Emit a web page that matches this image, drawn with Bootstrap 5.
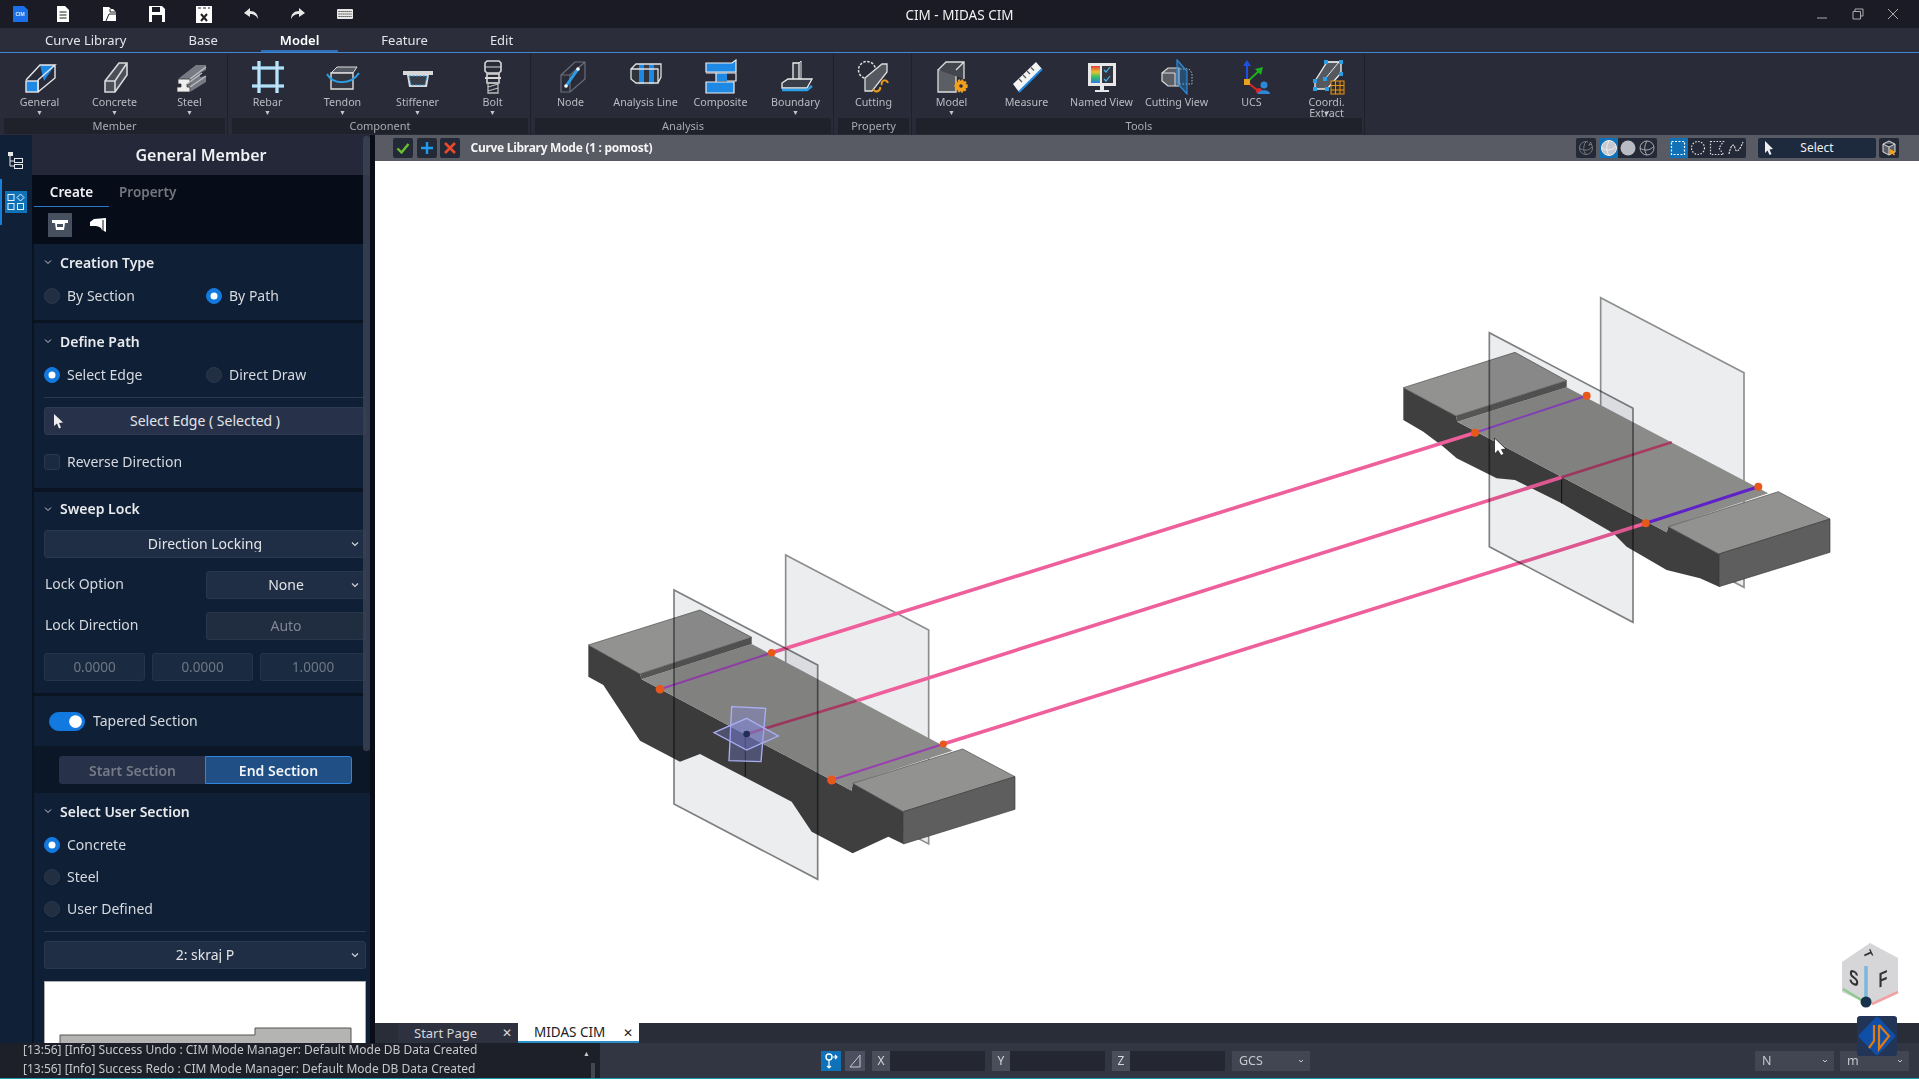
<!DOCTYPE html>
<html lang="en">
<head>
<meta charset="UTF-8">
<title>CIM - MIDAS CIM</title>
<link href="https://cdn.jsdelivr.net/npm/bootstrap@5.3.0/dist/css/bootstrap.min.css" rel="stylesheet">
<style>
html, body { height: 100%; margin: 0; overflow: hidden; }
body { background: #0a0d18; font-family: "Noto Sans", sans-serif; color: #e6e8ec; position: relative; }
svg { display: block; }

/* title bar + ribbon */
.title-bar { height: 28px; background: #1a1b25; }
.title-side { flex: 1 1 0; }
.logo-box { width: 39.5px; }
.tb-icon { width: 47px; }
.app-title { font-size: 13.5px; color: #f2f2f2; padding-top: 3px; }
.win-btn { width: 35.5px; }
.win-btn:last-child { margin-right: 8px; }
.menu-row { height: 25px; background: #2b2e3a; border-bottom: 1px solid #3f87d8; padding-left: 26px; gap: 24px; }
.menu-row .nav-link { padding: 0 19px; height: 24px; line-height: 25px; font-size: 13px; color: #e3e5ea; }
.menu-row .nav-link.active { color: #fff; font-weight: 600; border-bottom: 2px solid #2e6fb5; }
.ribbon { height: 82px; background: #292c38; padding-left: 2px; gap: 2px; }
.rb-group { border-right: 1px solid #1e202a; }
.rb-items { height: 65px; }
.rb-item { width: 75px; padding-top: 6px; position: relative; }
.rb-item svg { margin: 0 auto; }
.rb-label { font-size: 10.7px; line-height: 11px; color: #b9bbc2; text-align: center; margin-top: 2px; white-space: nowrap; }
.rb-arrow { font-size: 7px; line-height: 9px; color: #c5c7cc; text-align: center; }
.rb-over { margin-top: -10px; }
.rb-cap { height: 16px; line-height: 16px; margin: 0 2px 0 2px; background: #1f212b; font-size: 11px; color: #a9abb3; text-align: center; }

/* main area */
.work { height: 908px; }
.side { width: 370px; position: relative; overflow: hidden; background: #0a1322; }
.rail { width: 32px; background: #0f2037; position: relative; }
.rail-tree { padding: 17px 0 0 7px; }
.rail-active { margin-top: 10px; height: 46px; border-left: 2px solid #1a7fd6; padding: 12px 0 0 3px; }
.rail-blue { width: 22px; height: 22px; background: #0f72b8; padding: 2px; }
.pane { width: 338px; }
.pane-title { height: 40px; background: #242838; font-size: 16px; font-weight: 600; color: #f0f1f4; line-height: 40px; text-align: center; }
.pane-tabs { height: 69px; background: #060c18; padding-left: 2px; }
.pane-tabs .nav-link { padding: 0; width: 75px; height: 32px; line-height: 34px; font-size: 13.5px; font-weight: 600; text-align: center; color: #74777f; }
.pane-tabs .nav-link.active { color: #eef0f3; border-bottom: 1px solid #2e78c8; }
.pane-tabs .nav-link.off { width: 80px; text-align: left; padding-left: 10px; }
.mode-btns { padding: 6px 0 0 14px; gap: 14px; }
.mode-on { width: 24px; height: 24px; background: #47505e; }
.mode-off { width: 24px; height: 24px; }
.block { background: #0f1f35; margin-left: 2px; padding: 0 4px 0 10px; font-size: 14px; color: #d6d9de; }
.block + .block { margin-top: 3px; }
.b-head { height: 37px; padding-bottom: 1px; font-size: 14px; font-weight: 600; color: #e8eaee; }
.b-head.short { height: 35px; padding-bottom: 2px; }
.b-head svg { margin-right: 8px; }
.opt-row { height: 28px; }
.opt-col { width: 162px; }
.opt-row .form-check-input, .stack-row .form-check-input { width: 16px; height: 16px; margin: 1px 7px 0 0; background-color: #222e42; border: 1px solid #2c384c; }
.opt-row .form-check-input:checked, .stack-row .form-check-input:checked { background-color: #1279e0; border-color: #1279e0; }
.opt-row input[type=checkbox] { border-radius: 3px; background-color: #1a2a40; }
.stack-row { height: 32px; }
.b-hr { height: 1px; background: #2c3a50; margin: 0; }
.dark-btn { height: 28px; background: #27324a; border: 1px solid #2e3a50; border-radius: 3px; color: #e2e4e8; font-size: 14px; padding: 0; line-height: 24px; width: 100%; }
.pointer { left: 8px; top: 6px; }
.dark-sel { height: 28px; background-color: #202e45; border: 1px solid #2a384e; border-radius: 3px; color: #e2e4e8; font-size: 14px; line-height: 16px; padding: 0; text-align: center; text-align-last: center;
  background-image: url("data:image/svg+xml,%3csvg xmlns='http://www.w3.org/2000/svg' viewBox='0 0 10 10'%3e%3cpath d='M2 3.5 5 6.5 8 3.5' fill='none' stroke='%23d0d3d8' stroke-width='1.2'/%3e%3c/svg%3e"); background-size: 10px 10px; background-position: right 5px center; }
.dark-sel:disabled { background-color: #202c40; color: #7f8692; background-image: none; }
.lock-lbl { flex: 0 0 162px; padding: 0 0 3px 1px; }
.num-in { height: 28px; flex: 0 0 101px; width: 101px; border-radius: 3px; background: #1a2a40 !important; border: 1px solid #263449; color: #6f7785 !important; text-align: center; font-size: 13.5px; padding: 0; }
.num-in:last-child { flex: 1 1 0; }
.num-row { gap: 7px; margin-top: 13px; }
.taper { height: 50px; padding-left: 15px; }
.taper .form-check-input { width: 36px; height: 19px; margin: 0 8px 0 0; background-color: #1279e0; border-color: #1279e0; float: none; }
.taper .form-check-label { padding-bottom: 1px; }
.seg-wrap { height: 47px; margin-left: 2px; padding: 10px 0 0 25px; background: #0b1626; }
.seg-wrap .btn { width: 147px; height: 28px; padding: 0; line-height: 25px; font-size: 14px; font-weight: 600; border-radius: 3px; flex: 0 0 auto; }
.seg-off { background: #27324a; border: 1px solid #27324a; color: #747b87; }
.seg-on { background: #1f4f85 !important; border: 1px solid #2e86e0 !important; color: #f2f4f7 !important; }
.thumb { height: 70px; background: #fff; border: 1px solid #aaa; margin-top: 12px; overflow: hidden; }
.scroll-thumb { position: absolute; left: 363px; top: 1px; width: 7px; height: 615px; background: #3a4253; border-radius: 3px; opacity: .85; }

/* viewport */
.gutter { width: 5px; background: #0a0d18; }
.view-col { width: 1544px; }
.view-bar { height: 26px; background: #585a64; padding-left: 18px; }
.vb-btn { width: 20px; height: 20px; border-radius: 2px; background: #232936; margin-right: 3.5px; }
.vb-title { font-size: 12px; font-weight: 700; letter-spacing: -.28px; color: #f5f5f5; margin-left: 7px; }
.vb-set { height: 20px; border-radius: 2px; background: #232936; }
.vb-cell { width: 19.3px; height: 20px; }
.vb-cell.on { background: #0f72b8; }
.vb-select { width: 118px; height: 20px; background: #1d2a3e; border-radius: 2px; position: relative; font-size: 12px; line-height: 19px; text-align: center; color: #eee; margin-left: 12px; }
.vb-select svg { position: absolute; left: 6px; top: 3px; }
.scene { height: 862px; background: #fff; }
.plane { mix-blend-mode: multiply; }
.doc-tabs { height: 20px; background: #292d38; padding-left: 23px; }
.doc-tab { height: 20px; width: 120px; background: #2e3240; font-size: 13px; line-height: 20px; color: #d5d7dc; padding-left: 16px; position: relative; }
.doc-tab.live { width: 121px; background: #fff; color: #222; border-bottom: 2px solid #2a8fc4; padding-left: 16px; line-height: 19px; font-size: 13.5px; }
.doc-x { position: absolute; right: 6px; top: 0; font-size: 12px; }

/* status */
.status { height: 36px; background: #323642; border-bottom: 1px solid #1d9bb0; }
.log { width: 600px; height: 35px; background: #1e2029; position: relative; padding: 0 0 0 23px; font-size: 12px; line-height: 19px; color: #c5c7cc; }
.log-first { margin-top: -3px; }
.log-up { position: absolute; left: 583px; top: 1px; font-size: 7px; color: #ccc; }
.log-bar { position: absolute; left: 591px; top: 20px; width: 4px; height: 15px; background: #44474f; }
.coords { margin-left: 221px; gap: 4px; }
.co-btn { width: 20px; height: 20px; background: #4a5060; }
.co-btn.on { background: #0f72b8; }
.co-lab { width: 18px; height: 20px; background: #4a4e5b; font-size: 12px; line-height: 20px; text-align: center; color: #d6d8dc; margin-left: 3px; margin-right: -4px; }
.co-val { width: 95px; height: 20px; background: #242732; }
.st-sel { height: 20px; background-color: #424653; border: 0; border-radius: 0; font-size: 12.5px; line-height: 14px; color: #c5c8cd; padding: 0 16px 0 7px;
  background-image: url("data:image/svg+xml,%3csvg xmlns='http://www.w3.org/2000/svg' viewBox='0 0 10 10'%3e%3cpath d='M3 4 5 6 7 4' fill='none' stroke='%23c5c8cd' stroke-width='1'/%3e%3c/svg%3e"); background-size: 10px 10px; background-position: right 4px center; }
.sel-gcs { width: 78px; margin-left: 3px; }
.sel-n { width: 79px; }
.sel-m { width: 69px; margin: 0 10px 0 6px; }

.axis-logo { position: absolute; left: 1857px; top: 1016px; width: 40px; height: 40px; background: #223556; border-radius: 3px; }
</style>
</head>
<body class="d-flex flex-column">

<!-- title bar -->
<div class="title-bar d-flex align-items-center">
  <div class="title-side d-flex align-items-center">
    <div class="logo-box d-flex justify-content-center">
      <svg width="16" height="16" viewBox="0 0 16 16"><path d="M1 0H12L16 4V16H1Z" fill="#1b6fe8"/><text x="8" y="10" font-size="5" font-weight="700" fill="#dbe9ff" text-anchor="middle" font-family="Liberation Sans">CIM</text></svg>
    </div>
    <div class="tb-icon d-flex justify-content-center"><svg width="14" height="16" viewBox="0 0 14 16"><path d="M1 0H9L13 4V16H1Z" fill="#fff"/><path d="M3.500 6H10.500M3.500 9H10.500M3.500 12H10.500" stroke="#222" stroke-width="1"/></svg></div>
    <div class="tb-icon d-flex justify-content-center"><svg width="16" height="16" viewBox="0 0 16 16"><path d="M1 1H7L9 3H11L14 6V15H1Z" fill="#fff"/><path d="M8 3V6H14M4 15 7 8H15" fill="none" stroke="#222" stroke-width="1"/></svg></div>
    <div class="tb-icon d-flex justify-content-center"><svg width="16" height="16" viewBox="0 0 16 16"><path d="M0 0H13L16 3V16H0Z" fill="#fff"/><rect x="3" y="1" width="8" height="5" fill="#1a1b25"/><rect x="3" y="9" width="10" height="7" fill="#1a1b25"/></svg></div>
    <div class="tb-icon d-flex justify-content-center"><svg width="16" height="17" viewBox="0 0 16 17"><rect width="16" height="17" fill="#fff"/><path d="M2 2H5M7 2H10M12 2H14" stroke="#222"/><path d="M5 8 11 15M11 8 5 15" stroke="#222" stroke-width="2"/></svg></div>
    <div class="tb-icon d-flex justify-content-center"><svg width="16" height="14" viewBox="0 0 16 14"><path d="M7 1 1 6 7 10V7C10 7 13 8 15 12 15 7 12 4 7 4Z" fill="#e8e8e8"/></svg></div>
    <div class="tb-icon d-flex justify-content-center"><svg width="16" height="14" viewBox="0 0 16 14"><path d="M9 1 15 6 9 10V7C6 7 3 8 1 12 1 7 4 4 9 4Z" fill="#e8e8e8"/></svg></div>
    <div class="tb-icon d-flex justify-content-center"><svg width="16" height="10" viewBox="0 0 16 10"><rect width="16" height="10" rx="1" fill="#e8e8e8"/><path d="M1.500 2.500H14.500M1.500 5H14.500M1.500 7.500H14.500" stroke="#333" stroke-dasharray="1.200 .8" stroke-width="1"/></svg></div>
  </div>
  <div class="app-title">CIM - MIDAS CIM</div>
  <div class="title-side d-flex justify-content-end align-items-center">
    <div class="win-btn d-flex justify-content-center"><svg width="12" height="12" viewBox="0 0 12 12"><path d="M1 10H11" stroke="#a8aab0"/></svg></div>
    <div class="win-btn d-flex justify-content-center"><svg width="12" height="12" viewBox="0 0 12 12"><path d="M3 3V1H11V8H8.500M1 3.500H8.500V11H1Z" fill="none" stroke="#a8aab0"/></svg></div>
    <div class="win-btn d-flex justify-content-center"><svg width="12" height="12" viewBox="0 0 12 12"><path d="M1 1 11 11M11 1 1 11" stroke="#a8aab0"/></svg></div>
  </div>
</div>

<!-- menu -->
<ul class="nav menu-row">
  <li class="nav-item"><a class="nav-link" href="#">Curve Library</a></li>
  <li class="nav-item"><a class="nav-link" href="#">Base</a></li>
  <li class="nav-item"><a class="nav-link active" href="#">Model</a></li>
  <li class="nav-item"><a class="nav-link" href="#">Feature</a></li>
  <li class="nav-item"><a class="nav-link" href="#">Edit</a></li>
</ul>

<!-- ribbon -->
<div class="ribbon d-flex">
  <div class="rb-group">
    <div class="rb-items d-flex">
      <div class="rb-item"><svg width="36" height="36" viewBox="0 0 36 36"><path d="M18 6H33L22 22Z" fill="#1e88e5"/><path d="M33 6V19L16 33M4 21 18 6H33L16 21M16 21V33" fill="none" stroke="#e6e6e6" stroke-width="1.400"/><rect x="4" y="22" width="11" height="11" fill="#1e88e5"/><rect x="4" y="22" width="12" height="11" fill="none" stroke="#e6e6e6" stroke-width="1.400"/></svg><div class="rb-label">General</div><div class="rb-arrow">▼</div></div>
      <div class="rb-item"><svg width="36" height="36" viewBox="0 0 36 36"><path d="M8 22 22 4H30V16L18 33H8Z" fill="#4c4f59"/><path d="M8 22 22 4H30V16L18 33H8ZM8 22H18V33M18 22 30 4" fill="none" stroke="#d8d8da" stroke-width="1.600"/></svg><div class="rb-label">Concrete</div><div class="rb-arrow">▼</div></div>
      <div class="rb-item"><svg width="36" height="36" viewBox="0 0 36 36"><path d="M6 20 24 6H34V11L28 14V18L34 17V23L18 33H5V28H9V25H6Z" fill="#777a82"/><path d="M6 20H18V25H15V28H18V33H5V28H9V25H6Z" fill="#eee" stroke="#333" stroke-width=".8"/><path d="M18 20 34 8M15 25 30 14M18 28 34 17" stroke="#bcbdc2" stroke-width="1.400"/></svg><div class="rb-label">Steel</div><div class="rb-arrow">▼</div></div>
    </div>
    <div class="rb-cap">Member</div>
  </div>
  <div class="rb-group">
    <div class="rb-items d-flex">
      <div class="rb-item"><svg width="36" height="36" viewBox="0 0 36 36"><path d="M9 2V34M27 2V34M2 9H34M2 27H34" stroke="#8fc9e8" stroke-width="3.600"/><path d="M9 2V34M27 2V34M2 9H34M2 27H34" stroke="#e2f2fb" stroke-width="1.200"/></svg><div class="rb-label">Rebar</div><div class="rb-arrow">▼</div></div>
      <div class="rb-item"><svg width="36" height="36" viewBox="0 0 36 36"><path d="M6 14 12 8H32L28 14Z" fill="#555964" stroke="#ddd"/><path d="M6 14H28V30H6Z" fill="#33363f" stroke="#ddd" stroke-width="1.400"/><path d="M2 15C8 26 26 26 34 14" fill="none" stroke="#2a9fe8" stroke-width="2"/></svg><div class="rb-label">Tendon</div><div class="rb-arrow">▼</div></div>
      <div class="rb-item"><svg width="36" height="36" viewBox="0 0 36 36"><path d="M3 12H33V16H29L27 28H9L7 16H3Z" fill="#d8d8d8"/><path d="M9 17H27L25 26H11Z" fill="#3a3e48" stroke="#2a9fe8" stroke-dasharray="2 1.500"/></svg><div class="rb-label">Stiffener</div><div class="rb-arrow">▼</div></div>
      <div class="rb-item"><svg width="36" height="36" viewBox="0 0 36 36"><path d="M12 2H24L26 4V12L24 14H12L10 12V4Z" fill="none" stroke="#d8d8d8" stroke-width="1.600"/><path d="M10 8H26" stroke="#d8d8d8"/><path d="M12 15H24V24H12Z" fill="none" stroke="#d8d8d8" stroke-width="1.600"/><path d="M10 19H26" stroke="#d8d8d8" stroke-width="2"/><path d="M13 24H23V34H13ZM13 28 23 25M13 32 23 29" fill="none" stroke="#bbb" stroke-width="1.300"/></svg><div class="rb-label">Bolt</div><div class="rb-arrow">▼</div></div>
    </div>
    <div class="rb-cap">Component</div>
  </div>
  <div class="rb-group">
    <div class="rb-items d-flex">
      <div class="rb-item"><svg width="36" height="36" viewBox="0 0 36 36"><path d="M8 16 22 3H32V20L17 33H8ZM8 16H17V33M17 16 32 3" fill="none" stroke="#6b6e77" stroke-width="1.200"/><path d="M13 27 25 10" stroke="#2a9fe8" stroke-width="3"/><circle cx="13" cy="27" r="1.800" fill="#fff"/><circle cx="25" cy="10" r="1.800" fill="#fff"/></svg><div class="rb-label">Node</div></div>
      <div class="rb-item"><svg width="36" height="36" viewBox="0 0 36 36"><path d="M8 9 13 5H33L30 9" fill="#3a3e48"/><path d="M3 10H30V23L26 27H8L3 21Z" fill="#2f333c"/><path d="M11 5H16V25H11ZM21 5H26V25H21Z" fill="#1e88e5"/><path d="M3 10 8 5H33V18L30 24M3 10H30V24H8L3 20Z" fill="none" stroke="#e2e2e2" stroke-width="1.300"/></svg><div class="rb-label">Analysis Line</div></div>
      <div class="rb-item"><svg width="36" height="36" viewBox="0 0 36 36"><path d="M3 4H29L33 1V13H3Z" fill="#1e88e5" stroke="#eee" stroke-width="1.200"/><path d="M13 14H24V22H13Z" fill="#1e88e5"/><path d="M3 23H31V34H3Z" fill="#1e88e5" stroke="#eee" stroke-width="1.200"/><path d="M3 14H33V22H24M13 14V23" fill="none" stroke="#eee" stroke-width="1.200"/></svg><div class="rb-label">Composite</div></div>
      <div class="rb-item"><svg width="36" height="36" viewBox="0 0 36 36"><path d="M15 4H21V22H15Z" fill="#3a3e48" stroke="#eee" stroke-width="1.300"/><path d="M21 4 23 2V20L21 22" fill="none" stroke="#eee"/><path d="M4 24 10 20H34L29 29H4Z" fill="#3a3e48" stroke="#eee" stroke-width="1.300"/><path d="M4 31H29L34 27" fill="none" stroke="#2a9fe8" stroke-width="2.400"/></svg><div class="rb-label">Boundary</div><div class="rb-arrow">▼</div></div>
    </div>
    <div class="rb-cap">Analysis</div>
  </div>
  <div class="rb-group">
    <div class="rb-items d-flex">
      <div class="rb-item"><svg width="36" height="36" viewBox="0 0 36 36"><circle cx="11" cy="11" r="8.500" fill="none" stroke="#ddd" stroke-width="1.500" stroke-dasharray="2.500 1.500"/><path d="M9 19 26 5H31V13L16 32H9Z" fill="#55585f" stroke="#ddd" stroke-width="1.300"/><path d="M17 30C20 35 25 31 24 28M26 26C24 22 30 19 32 24" fill="none" stroke="#e89a1c" stroke-width="2"/></svg><div class="rb-label">Cutting</div></div>
    </div>
    <div class="rb-cap">Property</div>
  </div>
  <div class="rb-group">
    <div class="rb-items d-flex">
      <div class="rb-item"><svg width="36" height="36" viewBox="0 0 36 36"><path d="M4 11H22V33H4Z" fill="#5c5e66" stroke="#ddd" stroke-width="1.300"/><path d="M4 11 12 3H30V20M22 11 30 3" fill="#44464e" stroke="#ddd" stroke-width="1.300"/><circle cx="27" cy="27" r="5.500" fill="#f0a01e" stroke="#f0a01e" stroke-dasharray="2 1.200" stroke-width="2.400"/><circle cx="27" cy="27" r="1.800" fill="#2a2c38"/></svg><div class="rb-label">Model</div><div class="rb-arrow">▼</div></div>
      <div class="rb-item"><svg width="36" height="36" viewBox="0 0 36 36"><path d="M4 25 27 3 33 10 10 33Z" fill="#f4f4f4"/><path d="M10 33 33 10" stroke="#1e88e5" stroke-width="2.200"/><path d="M10 20 13 23M14 16 17 19M18 12 21 15M22 8.500 25 11.500" stroke="#555" stroke-width="1.200"/></svg><div class="rb-label">Measure</div></div>
      <div class="rb-item"><svg width="36" height="36" viewBox="0 0 36 36"><defs><linearGradient id="rainbow" x1="0" y1="0" x2="0" y2="1"><stop offset="0" stop-color="#e23b3b"/><stop offset=".35" stop-color="#e8c32e"/><stop offset=".65" stop-color="#2fc06a"/><stop offset="1" stop-color="#2f7be0"/></linearGradient></defs><rect x="4" y="4" width="28" height="23" fill="#e8e8e8"/><rect x="7" y="7" width="9" height="17" fill="url(#rainbow)"/><rect x="18" y="7" width="11" height="17" fill="#33363f"/><path d="M20 11 22 13 26 8M20 20 22 22 26 17" stroke="#4cb8f0" fill="none" stroke-width="1.200"/><path d="M16 27H20V31H25V33H11V31H16Z" fill="#e8e8e8"/></svg><div class="rb-label">Named View</div></div>
      <div class="rb-item"><svg width="36" height="36" viewBox="0 0 36 36"><path d="M3 14 9 9H20V27H9L3 22Z" fill="#5c5e66" stroke="#ddd" stroke-width="1.200"/><path d="M3 14H16V27" fill="none" stroke="#ddd"/><path d="M21 10H30L33 14V25H21" fill="none" stroke="#bbb" stroke-dasharray="1.500 1.500"/><path d="M18 1 28 12V35L18 24Z" fill="rgba(42,140,220,.35)" stroke="#2a8cdc" stroke-width="1.200"/></svg><div class="rb-label">Cutting View</div></div>
      <div class="rb-item"><svg width="36" height="36" viewBox="0 0 36 36"><path d="M13 23V5" stroke="#1d4fe0" stroke-width="2"/><path d="M13 1 9 7H17Z" fill="#1d4fe0"/><path d="M13 23 26 11" stroke="#1fb01f" stroke-width="2"/><path d="M29 8 21 10 27 16Z" fill="#1fb01f"/><path d="M13 23 23 31" stroke="#d92626" stroke-width="2"/><circle cx="25" cy="32" r="3" fill="#d92626"/><rect x="10" y="20" width="6" height="6" fill="#e8a21c"/><circle cx="30" cy="26" r="3.500" fill="#2e86d6"/><path d="M24 35C24 30 36 30 36 35Z" fill="#2e86d6"/></svg><div class="rb-label">UCS</div></div>
      <div class="rb-item"><svg width="36" height="36" viewBox="0 0 36 36"><path d="M6 22 18 3H32V14L18 30H6Z" fill="#55585f" stroke="#e8e8e8" stroke-width="1.400"/><path d="M18 3 30 3 16 20" fill="none" stroke="#e8e8e8"/><g fill="#2a9fe8"><rect x="15" y="1" width="4" height="4"/><rect x="30" y="1" width="4" height="4"/><rect x="30" y="13" width="4" height="4"/><rect x="14" y="18" width="4" height="4"/><rect x="4" y="20" width="4" height="4"/><rect x="4" y="28" width="4" height="4"/><rect x="16" y="28" width="4" height="4"/></g><rect x="22" y="22" width="13" height="13" fill="#3a2e20" stroke="#e8941c"/><path d="M26.500 22V35M31 22V35M22 26.500H35M22 31H35" stroke="#e8941c"/></svg><div class="rb-label">Coordi.<br>Extract</div><div class="rb-arrow rb-over">▼</div></div>
    </div>
    <div class="rb-cap">Tools</div>
  </div>
</div>

<!-- work area -->
<div class="work d-flex">
  <aside class="side d-flex">
    <div class="rail">
      <div class="rail-tree"><svg width="17" height="17" viewBox="0 0 17 17"><rect x="1" y="0" width="5" height="4" fill="#e8e8e8"/><path d="M3 4V14H7M3 9H7" fill="none" stroke="#e8e8e8"/><rect x="7.500" y="6.500" width="8" height="4" fill="none" stroke="#e8e8e8"/><rect x="7.500" y="12.500" width="8" height="4" fill="none" stroke="#e8e8e8"/></svg></div>
      <div class="rail-active"><div class="rail-blue"><svg width="18" height="18" viewBox="0 0 18 18"><rect x="1" y="1.500" width="6" height="6" fill="none" stroke="#e8f2fa"/><path d="M13.500 1 17 4.500 13.500 8 10 4.500Z" fill="none" stroke="#e8f2fa"/><rect x="1" y="10.500" width="6" height="6" fill="none" stroke="#e8f2fa"/><rect x="10.500" y="10.500" width="6" height="6" fill="none" stroke="#e8f2fa"/></svg></div></div>
    </div>
    <div class="pane">
      <div class="pane-title">General Member</div>
      <div class="pane-tabs">
        <ul class="nav">
          <li class="nav-item"><a class="nav-link active" href="#">Create</a></li>
          <li class="nav-item"><a class="nav-link off" href="#">Property</a></li>
        </ul>
        <div class="mode-btns d-flex">
          <div class="mode-on d-flex align-items-center justify-content-center"><svg width="16" height="12" viewBox="0 0 16 12"><path d="M0 1H16V4H13L12 11H4L3 4H0Z" fill="#fff"/><rect x="5" y="5" width="6" height="3" fill="#47505e"/></svg></div>
          <div class="mode-off d-flex align-items-center justify-content-center"><svg width="16" height="14" viewBox="0 0 16 14"><path d="M0 4 4 1 16 0V14L12 12C11 9 8 8 5 8H0Z" fill="#fff"/><path d="M13 2V13" stroke="#111"/></svg></div>
        </div>
      </div>

      <section class="block">
        <div class="b-head d-flex align-items-center"><svg width="8" height="8" viewBox="0 0 8 8"><path d="M1 2.500 4 5.500 7 2.500" fill="none" stroke="#c8ccd2"/></svg>Creation Type</div>
        <div class="opt-row d-flex align-items-center">
          <label class="opt-col d-flex align-items-center form-check-label"><input class="form-check-input" type="radio" name="kind">By Section</label>
          <label class="d-flex align-items-center form-check-label"><input class="form-check-input" type="radio" name="kind" checked>By Path</label>
        </div>
        <div style="height:11px"></div>
      </section>

      <section class="block">
        <div class="b-head d-flex align-items-center"><svg width="8" height="8" viewBox="0 0 8 8"><path d="M1 2.500 4 5.500 7 2.500" fill="none" stroke="#c8ccd2"/></svg>Define Path</div>
        <div class="opt-row d-flex align-items-center">
          <label class="opt-col d-flex align-items-center form-check-label"><input class="form-check-input" type="radio" name="path" checked>Select Edge</label>
          <label class="d-flex align-items-center form-check-label"><input class="form-check-input" type="radio" name="path">Direct Draw</label>
        </div>
        <div class="b-hr" style="margin-top:9px"></div>
        <button class="btn dark-btn position-relative" style="margin-top:9px"><svg class="position-absolute pointer" width="11" height="15" viewBox="0 0 11 15"><path d="M1 0V12L4 9.500 6 14.500 8 13.500 6 9 10 8.500Z" fill="#eee"/></svg>Select Edge ( Selected )</button>
        <div class="opt-row d-flex align-items-center" style="margin-top:12px">
          <label class="d-flex align-items-center form-check-label"><input class="form-check-input" type="checkbox">Reverse Direction</label>
        </div>
        <div style="height:13px"></div>
      </section>

      <section class="block" style="margin-top:4px">
        <div class="b-head short d-flex align-items-center"><svg width="8" height="8" viewBox="0 0 8 8"><path d="M1 2.500 4 5.500 7 2.500" fill="none" stroke="#c8ccd2"/></svg>Sweep Lock</div>
        <select class="form-select dark-sel" style="margin-top:3px"><option>Direction Locking</option></select>
        <div class="d-flex align-items-center" style="margin-top:13px"><div class="lock-lbl">Lock Option</div><select class="form-select dark-sel"><option>None</option></select></div>
        <div class="d-flex align-items-center" style="margin-top:13px"><div class="lock-lbl">Lock Direction</div><select class="form-select dark-sel" disabled><option>Auto</option></select></div>
        <div class="d-flex num-row">
          <input class="form-control num-in" value="0.0000" disabled>
          <input class="form-control num-in" value="0.0000" disabled>
          <input class="form-control num-in" value="1.0000" disabled>
        </div>
        <div style="height:12px"></div>
      </section>

      <section class="block taper form-check form-switch d-flex align-items-center mb-0">
        <input class="form-check-input" type="checkbox" role="switch" checked>
        <label class="form-check-label">Tapered Section</label>
      </section>

      <div class="seg-wrap">
        <div class="btn-group">
          <button class="btn seg-off">Start Section</button>
          <button class="btn seg-on">End Section</button>
        </div>
      </div>

      <section class="block">
        <div class="b-head d-flex align-items-center"><svg width="8" height="8" viewBox="0 0 8 8"><path d="M1 2.500 4 5.500 7 2.500" fill="none" stroke="#c8ccd2"/></svg>Select User Section</div>
        <div class="stack-row d-flex align-items-center" style="margin-top:-2px"><label class="d-flex align-items-center form-check-label"><input class="form-check-input" type="radio" name="sect" checked>Concrete</label></div>
        <div class="stack-row d-flex align-items-center"><label class="d-flex align-items-center form-check-label"><input class="form-check-input" type="radio" name="sect">Steel</label></div>
        <div class="stack-row d-flex align-items-center"><label class="d-flex align-items-center form-check-label"><input class="form-check-input" type="radio" name="sect">User Defined</label></div>
        <div class="b-hr" style="margin-top:7px"></div>
        <select class="form-select dark-sel" style="margin-top:9px"><option>2: skraj P</option></select>
        <div class="thumb"><svg width="320" height="68" viewBox="0 0 320 68"><path d="M15 53H210V46H306V68H15Z" fill="#b4b4b2" stroke="#555"/></svg></div>
      </section>
    </div>
    <div class="scroll-thumb"></div>
  </aside>
  <div class="gutter"></div>

  <div class="view-col d-flex flex-column">
    <div class="view-bar d-flex align-items-center">
      <div class="vb-btn d-flex align-items-center justify-content-center"><svg width="14" height="14" viewBox="0 0 14 14"><path d="M1.500 7.500 5.500 11.500 12.500 3" fill="none" stroke="#6cc22e" stroke-width="2.400"/></svg></div>
      <div class="vb-btn d-flex align-items-center justify-content-center"><svg width="14" height="14" viewBox="0 0 14 14"><path d="M7 1V13M1 7H13" stroke="#1f9cf0" stroke-width="2.400"/></svg></div>
      <div class="vb-btn d-flex align-items-center justify-content-center"><svg width="14" height="14" viewBox="0 0 14 14"><path d="M2 2 12 12M12 2 2 12" stroke="#ea4a2c" stroke-width="2.600"/></svg></div>
      <div class="vb-title">Curve Library Mode (1 : pomost)</div>
      <div class="ms-auto d-flex align-items-center" style="padding-right:20px">
        <div class="vb-set d-flex align-items-center justify-content-center" style="width:20px;margin-right:3px"><svg width="16" height="16" viewBox="0 0 16 16"><circle cx="8" cy="8" r="6.500" fill="none" stroke="#777"/><path d="M1.500 8C5 11 11 11 14 7M8 1.500C5 6 5 11 8 14.500" fill="none" stroke="#777"/><rect x="10" y="0" width="5" height="6" fill="#232936"/><text x="12.500" y="5.500" font-size="6" fill="#aaa" text-anchor="middle" font-family="Liberation Sans">A</text></svg></div>
        <div class="vb-set d-flex" style="margin-right:12px">
          <div class="vb-cell on d-flex align-items-center justify-content-center"><svg width="16" height="16" viewBox="0 0 16 16"><circle cx="8" cy="8" r="7.500" fill="#c6c8d0" stroke="#eee"/><path d="M1 8C5 11 11 11 15 6M8 1C5 6 5 11 8 15" fill="none" stroke="#eee"/></svg></div>
          <div class="vb-cell d-flex align-items-center justify-content-center"><svg width="16" height="16" viewBox="0 0 16 16"><circle cx="8" cy="8" r="7.500" fill="#b9bbc4"/></svg></div>
          <div class="vb-cell d-flex align-items-center justify-content-center"><svg width="16" height="16" viewBox="0 0 16 16"><circle cx="8" cy="8" r="7" fill="none" stroke="#aaa"/><path d="M1 8C5 11 11 11 15 6M8 1C5 6 5 11 8 15" fill="none" stroke="#aaa"/></svg></div>
        </div>
        <div class="vb-set d-flex">
          <div class="vb-cell on d-flex align-items-center justify-content-center"><svg width="16" height="16" viewBox="0 0 16 16"><rect x="1.500" y="1.500" width="13" height="13" fill="none" stroke="#fff" stroke-width="1.200" stroke-dasharray="2 1.500"/></svg></div>
          <div class="vb-cell d-flex align-items-center justify-content-center"><svg width="16" height="16" viewBox="0 0 16 16"><circle cx="8" cy="8" r="6.500" fill="none" stroke="#ddd" stroke-width="1.200" stroke-dasharray="1.500 1.500"/></svg></div>
          <div class="vb-cell d-flex align-items-center justify-content-center"><svg width="16" height="16" viewBox="0 0 16 16"><path d="M1.500 1.500H14.500L10 8 14.500 14.500H1.500Z" fill="none" stroke="#ddd" stroke-width="1.200" stroke-dasharray="1.500 1.500"/></svg></div>
          <div class="vb-cell d-flex align-items-center justify-content-center"><svg width="16" height="16" viewBox="0 0 16 16"><path d="M1 14C3 4 6 3 7 8 8 13 11 12 15 2" fill="none" stroke="#ddd" stroke-width="1.200" stroke-dasharray="2 1"/></svg></div>
        </div>
        <div class="vb-select"><svg width="10" height="14" viewBox="0 0 10 14"><path d="M1 0V12L3.500 9.500 5.500 14 7.500 13 5.500 8.500 9 8Z" fill="#eee"/></svg>Select</div>
        <div class="vb-set d-flex align-items-center justify-content-center" style="width:20px;margin-left:3px"><svg width="16" height="16" viewBox="0 0 16 16"><path d="M8 1 14 4V12L8 15 2 12V4ZM2 4 8 7 14 4M8 7V15" fill="#5c5f68" stroke="#ddd"/><path d="M9 9V15L11 13.500 13 15.500 14 14.500 12.500 12.500 15 12Z" fill="#f0a01e"/></svg></div>
      </div>
    </div>

    <!-- 3D view: drawn in page coordinates -->
    <div class="scene">
      <svg width="1544" height="862" viewBox="375 161 1544 862">
        <!-- left segment -->
        <g transform="translate(560 530) scale(.33333)">
          <polygon points="677,75 1106,300 1106,942 677,717" fill="#ecedef" stroke="#8c8e8e" stroke-width="5"/>
          <polygon points="85,345 240,432 245,448 875,782 878,760 1030,845 1030,942 985,920 878,970 755,905 695,815 420,672 360,695 240,632 130,465 85,440" fill="#3f3f3f"/>
          <polygon points="245,448 575,342 1178,662 878,760 875,782" fill="#8b8b89"/>
          <polygon points="240,432 575,322 575,342 245,448" fill="#555654"/>
          <polygon points="85,345 420,240 575,322 240,432" fill="#929290" stroke="#4a4a4a" stroke-width="2"/>
          <polygon points="878,760 1208,657 1365,740 1030,845" fill="#929290" stroke="#4a4a4a" stroke-width="2"/>
          <polygon points="1030,845 1365,740 1365,838 1030,942" fill="#5e5e5e" stroke="#3a3a3a" stroke-width="2"/>
          <path d="M556 612V740" stroke="#111" stroke-width="3"/>
        </g>
        <!-- right segment -->
        <g transform="translate(1380 280) scale(.33333)">
          <polygon points="662,53 1092,278 1092,922 662,697" fill="#ecedef" stroke="#8c8e8e" stroke-width="5"/>
          <polygon points="70,323 228,408 232,425 860,757 865,740 1017,822 1017,920 960,895 860,870 740,800 700,760 545,670 405,600 350,595 230,535 190,500 130,455 70,420" fill="#3f3f3f"/>
          <polygon points="232,425 560,322 1165,640 865,740 860,757" fill="#8b8b89"/>
          <polygon points="228,408 560,302 560,322 232,425" fill="#555654"/>
          <polygon points="70,323 405,217 560,302 228,408" fill="#929290" stroke="#4a4a4a" stroke-width="2"/>
          <polygon points="865,740 1195,635 1350,717 1017,822" fill="#929290" stroke="#4a4a4a" stroke-width="2"/>
          <polygon points="1017,822 1350,717 1350,817 1017,920" fill="#5e5e5e" stroke="#3a3a3a" stroke-width="2"/>
          <path d="M545 592V670" stroke="#111" stroke-width="3"/>
        </g>
        <!-- connecting lines -->
        <g fill="none" stroke-width="3.600">
          <path d="M771.700 652.700 1475 432.700" stroke="#ef5f9b"/>
          <path d="M856.700 700.700 1561.700 477.300" stroke="#ef5f9b"/>
          <path d="M746.700 734 856.700 700.700" stroke="#a83a62" stroke-width="2.600"/>
          <path d="M1561.700 477.300 1671.700 442.300" stroke="#a83a62" stroke-width="2.600"/>
          <path d="M943.300 744 1645.700 523.300" stroke="#ef5f9b"/>
        </g>
        <g fill="none" stroke-width="2">
          <path d="M660 689.300 771.700 652.700" stroke="#9a3fb0"/>
          <path d="M831.700 780 943.300 744" stroke="#9a3fb0"/>
          <path d="M1475 432.700 1586.700 395.700" stroke="#8a45c0"/>
        </g>
        <path d="M1645.700 523.300 1758.300 486.700" stroke="#5f22c8" stroke-width="3" fill="none"/>
        <!-- section planes in front -->
        <g transform="translate(560 530) scale(.33333)">
          <polygon class="plane" points="342,180 773,405 773,1048 342,822" fill="#ecedef" stroke="#7d7f80" stroke-width="5"/>
          <polygon points="515,530 617,535 603,695 507,692" fill="#8088ee" fill-opacity=".3" stroke="#a9aef2" stroke-width="4"/>
          <polygon points="462,608 560,565 655,618 560,660" fill="#8088ee" fill-opacity=".28" stroke="#a9aef2" stroke-width="4"/>
          <circle cx="560" cy="612" r="10" fill="#1f2f55"/>
        </g>
        <g transform="translate(1380 280) scale(.33333)">
          <polygon class="plane" points="328,158 759,385 759,1027 328,800" fill="#ecedef" stroke="#7d7f80" stroke-width="5"/>
        </g>
        <!-- end points -->
        <g fill="#e9581b">
          <circle cx="660" cy="689.300" r="4.300"/><circle cx="771.700" cy="652.700" r="3.800"/><circle cx="831.700" cy="780" r="4.500"/><circle cx="943.300" cy="744" r="3.600"/>
          <circle cx="1475" cy="432.700" r="4"/><circle cx="1586.700" cy="395.700" r="4"/><circle cx="1645.700" cy="523.300" r="4"/><circle cx="1758.300" cy="486.700" r="4"/>
        </g>
        <!-- mouse pointer -->
        <path d="M1494.500 438V454L1498 450.500 1501 455.500 1504 454 1501.500 449.500 1506 449Z" fill="#fff" stroke="#222" stroke-width=".8"/>
        <!-- view cube -->
        <g>
          <polygon points="1842,962 1870,943 1898,958 1898,992 1870,1005 1842,992" fill="#d6d6d8"/>
          <path d="M1843 989 1868 1004" stroke="#8fc98f" stroke-width="2.600"/>
          <path d="M1872 1004 1898 992" stroke="#efa3a3" stroke-width="2.600"/>
          <path d="M1866 1003V966" stroke="#7db8dc" stroke-width="3.600"/>
          <circle cx="1866" cy="1002" r="5.500" fill="#17324a"/>
          <text font-size="21" font-weight="700" fill="#333" text-anchor="middle" font-family="Liberation Sans" transform="matrix(.7 .3 0 1 1854 985)">S</text>
          <text font-size="21" font-weight="700" fill="#333" text-anchor="middle" font-family="Liberation Sans" transform="matrix(.7 -.3 0 1 1883 986)">F</text>
          <text font-size="12" font-weight="700" fill="#333" text-anchor="middle" font-family="Liberation Sans" transform="rotate(65 1868 954) translate(1868 958)">T</text>
        </g>
      </svg>
    </div>

    <div class="doc-tabs d-flex">
      <div class="doc-tab">Start Page<span class="doc-x">✕</span></div>
      <div class="doc-tab live">MIDAS CIM<span class="doc-x">✕</span></div>
    </div>
  </div>
</div>

<!-- status bar -->
<div class="status d-flex align-items-center">
  <div class="log">
    <div class="log-first">[13:56] [Info] Success Undo : CIM Mode Manager: Default Mode DB Data Created</div>
    <div>[13:56] [Info] Success Redo : CIM Mode Manager: Default Mode DB Data Created</div>
    <span class="log-up">▲</span><span class="log-bar"></span>
  </div>
  <div class="coords d-flex align-items-center">
    <div class="co-btn on d-flex align-items-center justify-content-center"><svg width="14" height="16" viewBox="0 0 14 16"><circle cx="5" cy="4" r="3" fill="none" stroke="#fff" stroke-width="1.400"/><path d="M5 7V15M3 13 5 15 7 13M9 4H13M11 2 13 4 11 6" fill="none" stroke="#fff" stroke-width="1.200"/></svg></div>
    <div class="co-btn d-flex align-items-center justify-content-center"><svg width="14" height="16" viewBox="0 0 14 16"><path d="M2 14 12 2V14Z" fill="none" stroke="#c4c7cd" stroke-width="1"/></svg></div>
    <div class="co-lab">X</div><div class="co-val"></div>
    <div class="co-lab">Y</div><div class="co-val"></div>
    <div class="co-lab">Z</div><div class="co-val"></div>
    <select class="form-select st-sel sel-gcs"><option>GCS</option></select>
  </div>
  <div class="ms-auto d-flex align-items-center">
    <select class="form-select st-sel sel-n"><option>N</option></select>
    <select class="form-select st-sel sel-m"><option>m</option></select>
  </div>
</div>

<!-- axis badge sits over the doc tab row and the status bar -->
<div class="axis-logo d-flex align-items-center justify-content-center"><svg width="38" height="38" viewBox="0 0 38 38"><path d="M19 1 36 19 19 37 2 19Z" fill="#0f4fa8" stroke="#0f4fa8" stroke-width="3" stroke-linejoin="round"/><path d="M16 8V24L11 31M21 8V32L31 19 21 8" fill="none" stroke="#e07a14" stroke-width="2.200"/></svg></div>

<script src="https://cdn.jsdelivr.net/npm/bootstrap@5.3.0/dist/js/bootstrap.bundle.min.js"></script>
</body>
</html>
